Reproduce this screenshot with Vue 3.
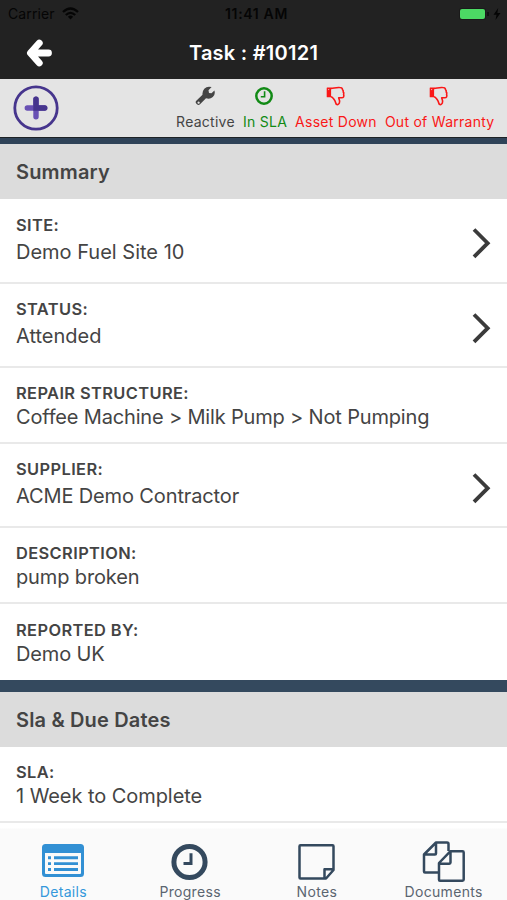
<script setup>
const summary = [
  { label: 'SITE:', value: 'Demo Fuel Site 10', link: true, k: 'site' },
  { label: 'STATUS:', value: 'Attended', link: true, k: 'status' },
  { label: 'REPAIR STRUCTURE:', value: 'Coffee Machine > Milk Pump > Not Pumping', k: 'repair' },
  { label: 'SUPPLIER:', value: 'ACME Demo Contractor', link: true, k: 'supplier' },
  { label: 'DESCRIPTION:', value: 'pump broken', k: 'description' },
  { label: 'REPORTED BY:', value: 'Demo UK', k: 'reported' },
]
const dates = [{ label: 'SLA:', value: '1 Week to Complete', k: 'sla' }]
const sections = [
  { title: 'Summary', rows: summary },
  { title: 'Sla & Due Dates', rows: dates },
]
</script>

<template>
  <div class="screen">
    <header class="top">
      <div class="statusbar">
        <div class="carrier">
          <span>Carrier</span>
          <svg width="17" height="13" viewBox="0 0 17 13">
            <g fill="none" stroke="#050505" stroke-width="2.3">
              <path d="M1 5Q8.500 -2 16 5" />
              <path d="M3.800 8Q8.500 3.700 13.200 8" />
            </g>
            <path d="M5.900 9.700Q8.500 7.400 11.100 9.700L8.500 12.500Z" fill="#050505" />
          </svg>
        </div>
        <span class="time">11:41 AM</span>
        <div class="power">
          <span class="battery"></span><span class="nub"></span>
          <svg width="8" height="12" viewBox="0 0 8 12"><path d="M5.200 0L0.500 6.700H3.500L2.500 12L7.500 5H4.400Z" fill="#050505" /></svg>
        </div>
      </div>
      <div class="nav">
        <svg class="back" width="28" height="28" viewBox="0 0 28 28">
          <path d="M14.300 4.100L5.400 14L14.300 23.900M6 14H23.500" fill="none" stroke="#fff" stroke-width="6.800" stroke-linecap="round" stroke-linejoin="round" />
        </svg>
        <h1>Task : #10121</h1>
      </div>
    </header>

    <div class="tools">
      <svg class="add" width="46" height="46" viewBox="0 0 46 46">
        <circle cx="23" cy="23" r="21.200" fill="none" stroke="#46358d" stroke-width="2.800" />
        <path d="M23 14.300V31.700M14.300 23H31.700" stroke="#6951b4" stroke-width="5.400" stroke-linecap="round" />
        <path d="M23 14.300V23H31.700" fill="none" stroke="#46358d" stroke-width="5.400" stroke-linecap="round" />
      </svg>
      <div class="flags">
        <div class="flag reactive">
          <svg width="20" height="20" viewBox="0 0 20 20">
            <path fill-rule="evenodd" fill="#444" d="M11 12.200L5 18.200Q3.500 19.600 2 18.300L1.200 17.400Q0 16 1.300 14.700L7.500 8.700Q7.100 5.500 9.300 2.800Q12.200 -0.300 16.600 1.100L13.500 4.300L14 7L16.500 7.300L19.400 4.500Q20.700 8.400 17.800 11.100Q14.800 13.500 11 12.200ZM3.600 15.500A1.100 1.100 0 1 0 3.610 15.500Z" />
          </svg>
          <span>Reactive</span>
        </div>
        <div class="flag insla">
          <svg width="20" height="20" viewBox="0 0 20 20">
            <circle cx="10" cy="10" r="7.700" fill="none" stroke="#118a15" stroke-width="2.500" />
            <path d="M10.600 5.200V10.700H6.800" fill="none" stroke="#118a15" stroke-width="1.600" />
          </svg>
          <span>In SLA</span>
        </div>
        <div v-for="t in ['Asset Down', 'Out of Warranty']" :key="t" class="flag bad">
          <svg width="20" height="20" viewBox="0 0 20 20">
            <path fill="#fa1717" fill-rule="evenodd" d="M1.200 1.600H5.100V11.300H1.200Q0.700 11.300 0.700 10.800V2.100Q0.700 1.600 1.200 1.600ZM2.700 3.100A0.500 0.500 0 1 0 2.710 3.100Z" />
            <path d="M5 2.400C8.200 2.200 9.500 1.300 13.600 1.500Q16.500 1.500 16.500 3.600Q17.600 4.500 17.200 5.900Q18.200 7 17.600 8.300Q18.600 11.700 15.600 11.800H12.700Q14.200 15.100 13.300 17.200Q12 19.300 10.400 18.300C9.500 17.500 9.900 15.700 8.300 13.700C7 12.100 6.500 11.200 5 10.800" fill="none" stroke="#fa1717" stroke-width="1.600" stroke-linejoin="round" />
          </svg>
          <span>{{ t }}</span>
        </div>
      </div>
    </div>

    <main>
      <section v-for="s in sections" :key="s.title">
        <h2>{{ s.title }}</h2>
        <div v-for="r in s.rows" :key="r.k" class="row" :class="[r.k, { link: r.link }]">
          <div class="copy">
            <div class="label">{{ r.label }}</div>
            <div class="value">{{ r.value }}</div>
          </div>
          <svg v-if="r.link" class="chevron" width="20" height="32" viewBox="0 0 20 32">
            <path d="M3 2.500L16.700 16.200L3 29.900" fill="none" stroke="#3b3b3b" stroke-width="3.800" />
          </svg>
        </div>
      </section>
    </main>

    <nav class="tabs">
      <div class="tab active">
        <svg width="44" height="42" viewBox="0 0 44 42">
          <path fill="#3290d4" fill-rule="evenodd" d="M4.500 4H39.500Q43 4 43 7.500V33.500Q43 37 39.500 37H4.500Q1 37 1 33.500V7.500Q1 4 4.500 4ZM4 13V33Q4 34 5 34H39Q40 34 40 33V13Z" />
          <path d="M13 17.700H37M13 23.600H37M13 29.500H37M7 17.700H10M7 23.600H10M7 29.500H10" stroke="#3290d4" stroke-width="2.900" />
        </svg>
        <span>Details</span>
      </div>
      <div class="tab progress">
        <svg width="44" height="42" viewBox="0 0 44 42">
          <circle cx="21.500" cy="22" r="15.600" fill="none" stroke="#34495e" stroke-width="5" />
          <path d="M23 13.300V23.500H15.500" fill="none" stroke="#34495e" stroke-width="3" />
        </svg>
        <span>Progress</span>
      </div>
      <div class="tab notes">
        <svg width="44" height="42" viewBox="0 0 44 42">
          <path d="M5.500 5.200H37.500Q38.500 5.200 38.500 6.200V30L31 38.500H5.500Q4.500 38.500 4.500 37.500V6.200Q4.500 5.200 5.500 5.200ZM38.500 29.300H29.500V38.500" fill="none" stroke="#34495e" stroke-width="2.500" stroke-linejoin="round" />
        </svg>
        <span>Notes</span>
      </div>
      <div class="tab documents">
        <svg width="44" height="42" viewBox="0 0 44 42">
          <g fill="none" stroke="#34495e" stroke-width="2.500" stroke-linejoin="round">
            <path d="M16.500 32.500H3Q2 32.500 2 31.500V14.500L14 2.500H25Q26.500 2.500 26.500 4V11M14 2.500V13.500Q14 14.500 13 14.500H2" />
            <path d="M28.500 11.200H40.500Q41.700 11.200 41.700 12.400V39.500Q41.700 40.700 40.500 40.700H18Q17 40.700 17 39.700V23ZM28.500 11.200V22.500Q28.500 23.700 27.300 23.700H17" />
          </g>
        </svg>
        <span>Documents</span>
      </div>
    </nav>
  </div>
</template>

<style>
body {
  background: #fff;
}
</style>

<style scoped>
.screen {
  width: 507px;
  height: 900px;
  display: flex;
  flex-direction: column;
  overflow: hidden;
  background: #fff;
  color: #444;
  font-family: Inter, 'Liberation Sans', sans-serif;
}
.screen svg {
  display: block;
  flex: none;
}
h1, h2 {
  margin: 0;
}
.top {
  height: 79px;
  flex: none;
  background: #222;
}
.statusbar {
  height: 27px;
  display: grid;
  grid-template-columns: 1fr auto 1fr;
  align-items: center;
  padding: 0 6px 0 8px;
  color: #050505;
  font-size: 14px;
}
.carrier {
  display: flex;
  align-items: center;
  gap: 7px;
  letter-spacing: 0.1px;
}
.time {
  padding-left: 4px;
  font-weight: 600;
  font-size: 14px;
  letter-spacing: 0.65px;
}
.power {
  display: flex;
  align-items: center;
  justify-content: flex-end;
}
.battery {
  width: 25px;
  height: 10px;
  border-radius: 2px;
  background: #4cd964;
  box-shadow: 0 0 0 1px #1a1a1a;
}
.nub {
  width: 2px;
  height: 4px;
  margin: 0 4px 0 2px;
  background: #111;
}
.nav {
  height: 52px;
  display: grid;
  grid-template-columns: 1fr auto 1fr;
  align-items: center;
}
.back {
  margin-left: 25px;
}
h1 {
  color: #fff;
  font-size: 20px;
  font-weight: 600;
  letter-spacing: 0.25px;
}
.tools {
  height: 59px;
  flex: none;
  display: flex;
  justify-content: space-between;
  background: #e4e4e4;
  border-bottom: 1px solid #1d2226;
  padding: 0 12.500px 0 13px;
  box-sizing: border-box;
}
.add {
  margin-top: 6px;
}
.flags {
  display: flex;
  gap: 8px;
  padding-top: 7px;
}
.flag {
  display: flex;
  flex-direction: column;
  align-items: center;
  gap: 6px;
  font-size: 14px;
  line-height: 20px;
  white-space: nowrap;
  letter-spacing: 0.27px;
}
.insla svg {
  margin-right: 2px;
}
.bad + .bad svg {
  margin-right: 2px;
}
.insla {
  color: #118a15;
}
.bad {
  color: #fa1717;
}
section {
  border-top: 12px solid #34495e;
}
section:first-child {
  border-top: 6px solid #2f4358;
}
h2 {
  height: 55px;
  line-height: 56px;
  padding: 0 16px;
  background: #dcdcdc;
  font-size: 20px;
  font-weight: 600;
  letter-spacing: 0.16px;
}
.row {
  height: 76px;
  box-sizing: border-box;
  display: flex;
  justify-content: space-between;
  padding: 13px 16px 0;
  border-bottom: 2px solid #e9e9e9;
}
.link {
  height: 84px;
}
.site {
  height: 85px;
  padding-top: 14px;
}
.reported {
  padding-top: 14px;
  border-bottom: 0;
}
.label {
  font-size: 16.400px;
  line-height: 24px;
  font-weight: 600;
  letter-spacing: 0.4px;
}
.value {
  font-size: 20px;
  line-height: 24px;
  white-space: nowrap;
  letter-spacing: -0.13px;
}
.site .value,
.status .value {
  letter-spacing: 0;
}
.repair .value {
  letter-spacing: -0.17px;
}
.sla .value {
  letter-spacing: -0.06px;
}
.link .value {
  margin-top: 3px;
}
.chevron {
  margin-top: 15px;
}
.site .chevron {
  margin-top: 14px;
}
.tabs {
  height: 77px;
  flex: none;
  display: grid;
  grid-template-columns: repeat(4, 1fr);
  background: linear-gradient(#fff 5px, #fafafa 6px);
  box-sizing: border-box;
  padding-top: 17px;
}
.tab {
  display: flex;
  flex-direction: column;
  align-items: center;
  color: #5b6570;
  font-size: 14px;
  line-height: 19px;
  letter-spacing: 0.32px;
}
.active {
  color: #3498db;
}
</style>
